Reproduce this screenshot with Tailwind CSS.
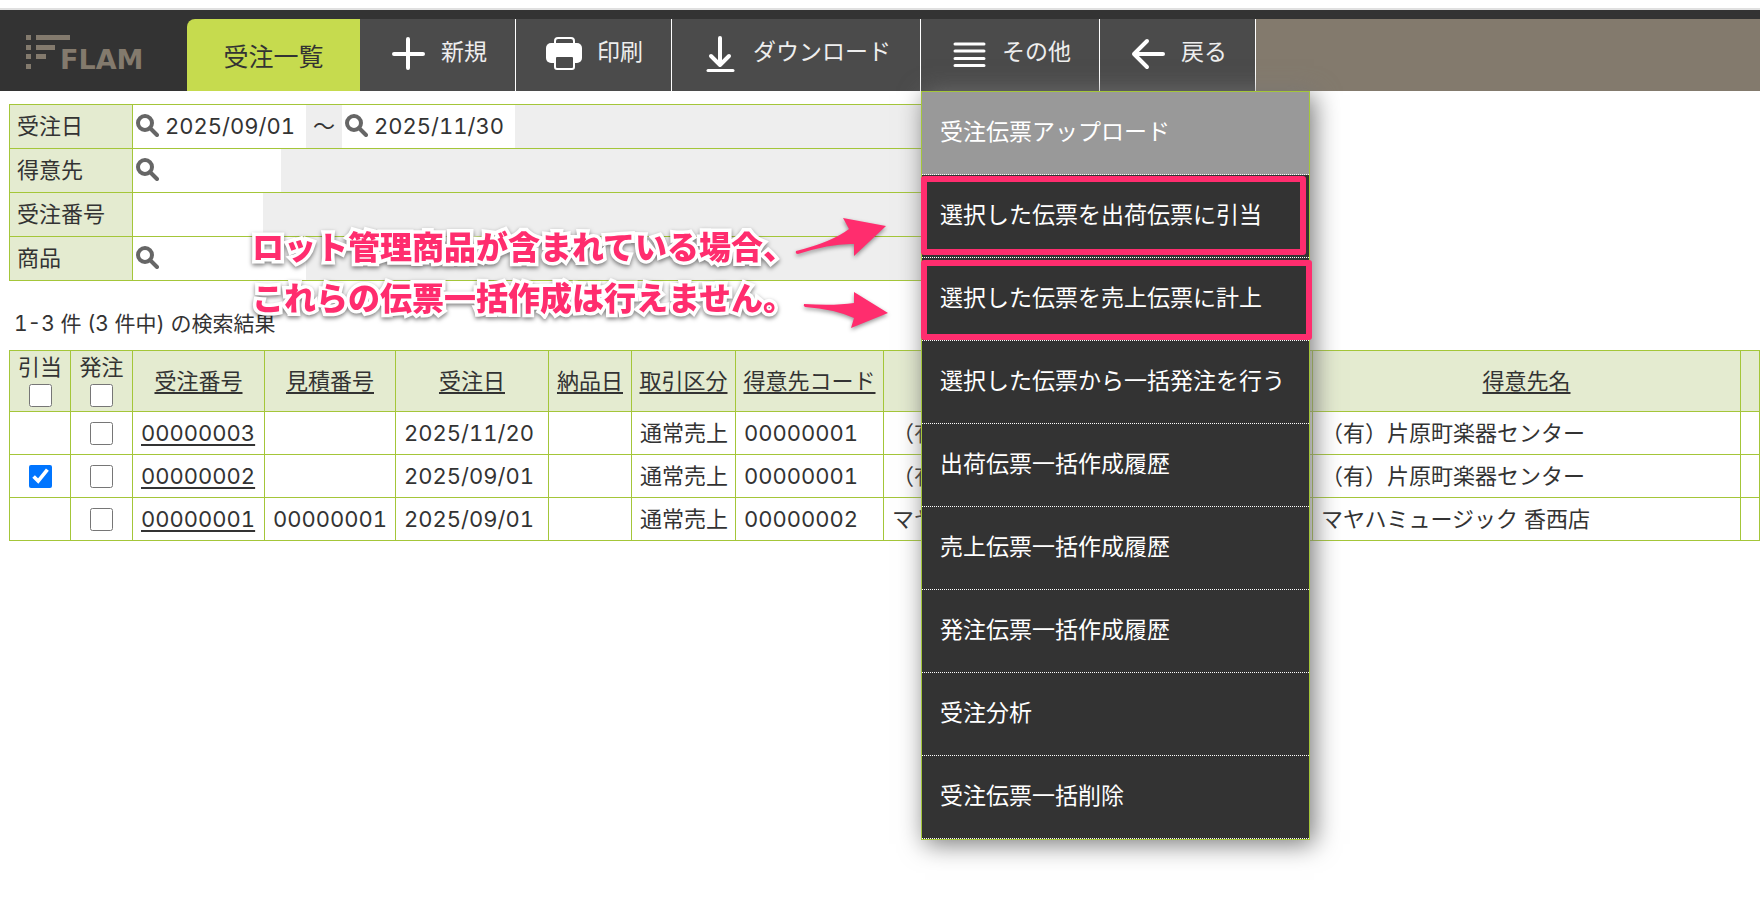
<!DOCTYPE html>
<html lang="ja">
<head>
  <meta charset="UTF-8">
  <meta name="viewport" content="width=device-width, initial-scale=1.0">
  <title>受注一覧</title>
  <script src="https://cdn.jsdelivr.net/npm/@tailwindcss/browser@4"></script>
</head>
<body class="min-h-screen bg-white text-[#333] text-[22px] leading-none tabular-nums whitespace-nowrap font-[Inter,'Noto_Sans_CJK_JP',sans-serif]">

  <!-- Header -->
  <header class="pt-2">
    <div class="flex bg-[#333] border-t-2 border-[#e0e0e0] pt-[9px]">
      <a href="#" aria-label="FLAM" class="w-[187px] h-[72px] shrink-0">
        <svg class="w-[187px] h-[72px]" viewBox="0 0 187 72" fill="#837a6d">
          <path d="M26 16h5v5h-5zM26 26h5v5h-5zM26 35h5v5h-5zM26 45h5v5h-5zM36 16h34v5H36zM36 26h19v5H36zM36 35h10v5H36z"/>
          <text x="60" y="50" font-family="DejaVu Sans" font-size="27" font-weight="bold">FLAM</text>
        </svg>
      </a>
      <h1 class="w-[173px] h-[72px] shrink-0 flex items-center justify-center pt-1 rounded-tl-lg bg-[#c6db4e] text-[25px]">受注一覧</h1>

      <nav class="flex flex-1 bg-[#837a6d] text-[23px] text-[#eee]">
        <button class="flex items-center gap-[15px] h-[72px] pl-[30px] pr-7 pb-1.5 bg-[#4b4b4b] border-r border-white">
          <svg class="size-9" viewBox="0 0 36 36" fill="none" stroke="#fff" stroke-width="4" stroke-linecap="round"><path d="M18 5v29M4 20h29"/></svg>
          新規
        </button>
        <button class="flex items-center gap-[15px] h-[72px] pl-[30px] pr-7 pb-1.5 bg-[#4b4b4b] border-r border-white">
          <svg class="size-9" viewBox="0 0 36 36">
            <rect x="9" y="4" width="19" height="12" rx="3" fill="none" stroke="#fff" stroke-width="2"/>
            <rect x="0" y="9" width="36" height="20" rx="5" fill="#fff"/>
            <rect x="9" y="22" width="19" height="13" rx="2" fill="#4b4b4b" stroke="#fff" stroke-width="2"/>
          </svg>
          印刷
        </button>
        <button class="flex items-center gap-[15px] h-[72px] pl-[30px] pr-[29px] pb-1.5 bg-[#4b4b4b] border-r border-white">
          <svg class="size-9 overflow-visible" viewBox="0 0 36 36" fill="none" stroke="#fff" stroke-width="4" stroke-linecap="round" stroke-linejoin="round"><path d="M18 4v27M9 22l9 9 9-9"/><path d="M6 36.500h25" stroke-width="3"/></svg>
          ダウンロード
        </button>
        <div class="relative">
          <button aria-expanded="true" class="flex items-center gap-[15px] h-[72px] pl-[30px] pr-7 pb-1.5 bg-[#4b4b4b] border-r border-white">
            <svg class="size-9" viewBox="0 0 36 36" fill="none" stroke="#fff" stroke-width="3" stroke-linecap="round"><path d="M4 10h29M4 17h29M4 24.500h29M4 31.500h29"/></svg>
            その他
          </button>

          <!-- Dropdown -->
          <ul class="absolute z-10 top-full left-0 w-[389px] border border-[#a4c639] bg-[#333] text-white shadow-[4px_4px_24px_#777]">
            <li class="h-[83px] border-b border-dotted border-white bg-[#999]"><a href="#" class="flex items-center h-full pl-[18px] pb-0.5">受注伝票アップロード</a></li>
            <li class="relative h-[83px] border-b border-dotted border-white">
              <a href="#" class="flex items-center h-full pl-[18px] pb-0.5">選択した伝票を出荷伝票に引当</a>
              <span class="absolute pointer-events-none top-px bottom-0.5 -left-px right-[3px] border-6 border-[#ff2d6e] rounded-[3px]"></span>
            </li>
            <li class="relative h-[83px] border-b border-dotted border-white">
              <a href="#" class="flex items-center h-full pl-[18px] pb-0.5">選択した伝票を売上伝票に計上</a>
              <span class="absolute pointer-events-none top-0.5 bottom-0 -left-px -right-[3px] border-6 border-[#ff2d6e] rounded-[3px]"></span>
            </li>
            <li class="h-[83px] border-b border-dotted border-white"><a href="#" class="flex items-center h-full pl-[18px] pb-0.5">選択した伝票から一括発注を行う</a></li>
            <li class="h-[83px] border-b border-dotted border-white"><a href="#" class="flex items-center h-full pl-[18px] pb-0.5">出荷伝票一括作成履歴</a></li>
            <li class="h-[83px] border-b border-dotted border-white"><a href="#" class="flex items-center h-full pl-[18px] pb-0.5">売上伝票一括作成履歴</a></li>
            <li class="h-[83px] border-b border-dotted border-white"><a href="#" class="flex items-center h-full pl-[18px] pb-0.5">発注伝票一括作成履歴</a></li>
            <li class="h-[83px] border-b border-dotted border-white"><a href="#" class="flex items-center h-full pl-[18px] pb-0.5">受注分析</a></li>
            <li class="h-[83px] border-b border-dotted border-white"><a href="#" class="flex items-center h-full pl-[18px] pb-0.5">受注伝票一括削除</a></li>
          </ul>
        </div>
        <button class="flex items-center gap-[15px] h-[72px] pl-[30px] pr-7 pb-1.5 bg-[#4b4b4b] border-r border-white">
          <svg class="size-9" viewBox="0 0 36 36" fill="none" stroke="#fff" stroke-width="4" stroke-linecap="round" stroke-linejoin="round"><path d="M33 20H4M17 7L4 20l13 13"/></svg>
          戻る
        </button>
      </nav>
    </div>
  </header>

  <main class="relative pl-[9px] pt-[13px]">

    <!-- Search conditions -->
    <form class="w-3/5 border border-b-0 border-[#a4c639] bg-[#eee]">
      <div class="flex h-11 border-b border-[#a4c639]">
        <label for="dateFrom" class="w-[123px] flex items-center pl-[7px] pb-0.5 bg-[#e4ebd0] border-r border-[#a4c639]">受注日</label>
        <div class="flex items-center gap-[6px] w-[173px] pl-[3px] pb-0.5 bg-white">
          <svg class="size-[23px] shrink-0" viewBox="0 0 23 23" fill="none" stroke="#666" stroke-width="4"><circle cx="9" cy="9" r="7"/><path d="M14 14l7 7" stroke-linecap="round"/></svg>
          <input id="dateFrom" type="text" value="2025/09/01" class="w-full min-w-0 h-full outline-none">
        </div>
        <span class="w-9 flex items-center justify-center pb-0.5">～</span>
        <div class="flex items-center gap-[6px] w-[173px] pl-[3px] pb-0.5 bg-white">
          <svg class="size-[23px] shrink-0" viewBox="0 0 23 23" fill="none" stroke="#666" stroke-width="4"><circle cx="9" cy="9" r="7"/><path d="M14 14l7 7" stroke-linecap="round"/></svg>
          <input id="dateTo" type="text" aria-label="受注日 終了" value="2025/11/30" class="w-full min-w-0 h-full outline-none">
        </div>
      </div>
      <div class="flex h-11 border-b border-[#a4c639]">
        <label for="customer" class="w-[123px] flex items-center pl-[7px] pb-0.5 bg-[#e4ebd0] border-r border-[#a4c639]">得意先</label>
        <div class="flex items-center gap-[6px] w-[148px] pl-[3px] pb-0.5 bg-white">
          <svg class="size-[23px] shrink-0" viewBox="0 0 23 23" fill="none" stroke="#666" stroke-width="4"><circle cx="9" cy="9" r="7"/><path d="M14 14l7 7" stroke-linecap="round"/></svg>
          <input id="customer" type="text" class="w-full min-w-0 h-full outline-none">
        </div>
      </div>
      <div class="flex h-11 border-b border-[#a4c639]">
        <label for="orderNo" class="w-[123px] flex items-center pl-[7px] pb-0.5 bg-[#e4ebd0] border-r border-[#a4c639]">受注番号</label>
        <input id="orderNo" type="text" class="w-[130px] bg-white outline-none">
      </div>
      <div class="flex h-11 border-b border-[#a4c639]">
        <label for="product" class="w-[123px] flex items-center pl-[7px] pb-0.5 bg-[#e4ebd0] border-r border-[#a4c639]">商品</label>
        <div class="flex items-center gap-[6px] w-[173px] pl-[3px] pb-0.5 bg-white">
          <svg class="size-[23px] shrink-0" viewBox="0 0 23 23" fill="none" stroke="#666" stroke-width="4"><circle cx="9" cy="9" r="7"/><path d="M14 14l7 7" stroke-linecap="round"/></svg>
          <input id="product" type="text" class="w-full min-w-0 h-full outline-none">
        </div>
      </div>
    </form>

    <p class="pl-[5px] pt-8 pb-4 text-[21px]">1-3 件 (3 件中) の検索結果</p>

    <!-- Results -->
    <table class="w-full table-fixed border-collapse [&_th]:border [&_td]:border [&_th]:border-[#a4c639] [&_td]:border-[#a4c639] [&_th]:font-normal [&_th]:p-0 [&_td]:py-0 [&_td]:px-2 [&_td]:overflow-hidden [&_a]:underline [&_a]:underline-offset-3 [&_a]:decoration-2">
      <colgroup>
        <col class="w-[61px]">
        <col class="w-[62px]">
        <col class="w-[132px]">
        <col class="w-[131px]">
        <col class="w-[153px]">
        <col class="w-[83px]">
        <col class="w-[104px]">
        <col class="w-[148px]">
        <col class="w-[429px]">
        <col class="w-[428px]">
        <col>
      </colgroup>
      <thead class="bg-[#e4ebd0]">
        <tr class="h-[61px]">
          <th><label class="flex flex-col items-center gap-1.5">引当<input type="checkbox" class="size-[23px]"></label></th>
          <th><label class="flex flex-col items-center gap-1.5">発注<input type="checkbox" class="size-[23px]"></label></th>
          <th><a href="#">受注番号</a></th>
          <th><a href="#">見積番号</a></th>
          <th><a href="#">受注日</a></th>
          <th><a href="#">納品日</a></th>
          <th><a href="#">取引区分</a></th>
          <th><a href="#">得意先コード</a></th>
          <th></th>
          <th><a href="#">得意先名</a></th>
          <th></th>
        </tr>
      </thead>
      <tbody>
        <tr class="h-[43px]">
          <td></td>
          <td><input type="checkbox" aria-label="発注 00000003" class="block mx-auto size-[23px]"></td>
          <td><a href="#">00000003</a></td>
          <td></td>
          <td>2025/11/20</td>
          <td></td>
          <td>通常売上</td>
          <td>00000001</td>
          <td>（有）片原町楽器センター</td>
          <td>（有）片原町楽器センター</td>
          <td></td>
        </tr>
        <tr class="h-[43px]">
          <td><input type="checkbox" aria-label="引当 00000002" checked class="block mx-auto size-[23px]"></td>
          <td><input type="checkbox" aria-label="発注 00000002" class="block mx-auto size-[23px]"></td>
          <td><a href="#">00000002</a></td>
          <td></td>
          <td>2025/09/01</td>
          <td></td>
          <td>通常売上</td>
          <td>00000001</td>
          <td>（有）片原町楽器センター</td>
          <td>（有）片原町楽器センター</td>
          <td></td>
        </tr>
        <tr class="h-[43px]">
          <td></td>
          <td><input type="checkbox" aria-label="発注 00000001" class="block mx-auto size-[23px]"></td>
          <td><a href="#">00000001</a></td>
          <td>00000001</td>
          <td>2025/09/01</td>
          <td></td>
          <td>通常売上</td>
          <td>00000002</td>
          <td>マヤハミュージック 香西店</td>
          <td>マヤハミュージック 香西店</td>
          <td></td>
        </tr>
      </tbody>
    </table>

    <!-- Note with arrows -->
    <div class="absolute z-20 top-[131px] left-[252px] flex pointer-events-none">
      <p class="w-[538px] text-[32px] leading-[51px] font-black text-[#ff2d6e] [-webkit-text-stroke:7px_white] [paint-order:stroke_fill] [stroke-linejoin:round] drop-shadow-[0_2px_2px_rgb(0_0_0/0.5)]">ロット管理商品が含まれている場合、<br>これらの伝票一括作成は行えません。</p>
      <svg class="w-[104px] h-[120px] overflow-visible drop-shadow-[0_2px_2px_rgb(0_0_0/0.4)]" viewBox="790 222 104 120" fill="#ff2d6e">
        <path d="M796 251Q832 242 849 229L843 218 886 226 854 256 854 244Q832 243 798 254Q795 254 796 251Z"/>
        <path d="M804 304Q834 306 854 303L854 292 888 313 851 328 854 318Q834 309 805 307Q803 306 804 304Z"/>
      </svg>
    </div>
  </main>

</body>
</html>
